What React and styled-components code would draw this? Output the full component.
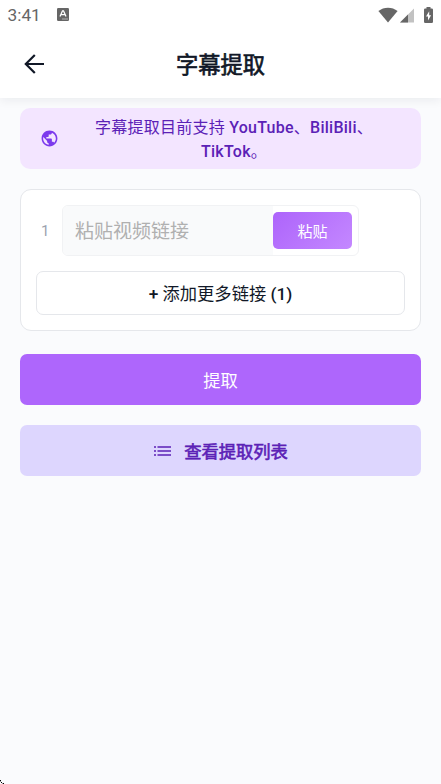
import React from "react";
import styled, { createGlobalStyle } from "styled-components";

const GlobalStyle = createGlobalStyle`
  * {
    box-sizing: border-box;
  }
  body {
    margin: 0;
    background: #fafbfd;
    font-family: Roboto, "Noto Sans CJK SC", sans-serif;
  }
  button, input {
    font-family: inherit;
  }
`;

const Screen = styled.div`
  position: relative;
  height: 784px;
  overflow: hidden;
  background: #fafbfd;
`;

const Top = styled.div`
  height: 98px;
  background: #fff;
  box-shadow: 0 2px 10px rgba(17, 24, 39, 0.07);
`;

const StatusBar = styled.div`
  height: 30px;
  padding: 0 8px 1px 7px;
  display: flex;
  align-items: center;
  color: #666;
`;

const Clock = styled.span`
  font-size: 17.3px;
  line-height: 29px;
  width: 50px;
  padding: 1px 0 0 0.5px;
`;

const StatusIcons = styled.div`
  margin-left: auto;
  display: flex;
`;

const Header = styled.header`
  height: 68px;
  padding: 0 22px;
  display: grid;
  grid-template-columns: 24px 1fr 24px;
  align-items: center;
`;

const IconButton = styled.button`
  display: flex;
  padding: 0;
  border: 0;
  background: none;
  color: #111827;
`;

// regular glyphs with a thin outline, lighter than the real bold cut
const Title = styled.h1`
  margin: 0;
  padding-top: 2px;
  text-align: center;
  font-size: 22.3px;
  line-height: 32px;
  font-weight: 400;
  -webkit-text-stroke: 0.65px currentColor;
  color: #111827;
`;

const Latin = styled.span`
  font-weight: 500;
`;

const Content = styled.main`
  padding: 10px 20px;
`;

const Notice = styled.div`
  height: 61px;
  padding: 0 20px 0 19.5px;
  display: flex;
  align-items: center;
  border-radius: 10px;
  background: #f3e5ff;
  color: #7c3aed;
`;

const NoticeText = styled.p`
  flex: 1;
  margin: 0 0 0 10.5px;
  padding: 2px 2px 0 0;
  text-align: center;
  font-size: 16px;
  line-height: 23.5px;
  letter-spacing: 0.25px;
  color: #5b21b6;
`;

const Card = styled.section`
  height: 142px;
  margin-top: 20px;
  padding: 15px;
  border: 1px solid #e5e7eb;
  border-radius: 11px;
  background: #fff;
`;

const LinkRow = styled.div`
  display: flex;
  align-items: center;
  height: 51px;
`;

const Index = styled.span`
  width: 26px;
  padding-left: 5px;
  font-size: 15px;
  color: #9ca3af;
`;

const Field = styled.div`
  display: flex;
  align-items: center;
  width: 297px;
  height: 51px;
  padding-right: 6px;
  border: 1px solid #f1f2f4;
  border-radius: 6px;
  overflow: hidden;
`;

const LinkInput = styled.input`
  flex: 1;
  min-width: 0;
  height: 49px;
  padding: 2px 12px 0;
  border: 0;
  background: #f9fafb;
  font-size: 19px;
  &::placeholder {
    color: #b0b0b0;
    opacity: 1;
  }
`;

const PasteButton = styled.button`
  width: 79px;
  height: 37px;
  padding: 0 0 1px;
  border: 0;
  border-radius: 5px;
  background: linear-gradient(135deg, #ad64fb, #c488ff);
  color: #fff;
  font-size: 15px;
`;

const AddButton = styled.button`
  display: block;
  width: 369px;
  height: 44px;
  margin-top: 15px;
  padding: 0 0 2px;
  border: 1px solid #e5e7eb;
  border-radius: 7px;
  background: #fff;
  color: #111827;
  font-size: 17.3px;
`;

const ActionButton = styled.button`
  display: flex;
  align-items: center;
  justify-content: center;
  gap: 12px;
  width: 100%;
  height: 51px;
  margin-top: ${props => props.$gap}px;
  padding: 0;
  border: 0;
  border-radius: 7px;
  background: ${props => (props.$primary ? "#ae66fc" : "#ddd6fe")};
  color: ${props => (props.$primary ? "#fff" : "#5b21b6")};
  font-size: 17.3px;
  -webkit-text-stroke: ${props => (props.$primary ? "0" : "0.6px")};
`;

const ScreenCorner = styled.svg`
  position: absolute;
  left: 0;
  bottom: 0;
`;

const KeyboardIcon = () => (
  <svg width="12" height="13" viewBox="0 0 12 13">
    <rect width="12" height="13" rx="1.2" fill="#666" />
    <path d="M3 8.4 5.5 2.8h1L9 8.4M4 6.7h4" fill="none" stroke="#fff" strokeWidth="1.3" />
    <path d="M5.5 11h1M7.5 11h1M9.5 11h1" stroke="#fff" strokeWidth="1" />
  </svg>
);

const WifiIcon = () => (
  <svg width="20" height="16" viewBox="0 0 20 16">
    <path d="M0.4 4.1C5.8-.4 14.2-.4 19.6 4.1L10 15.5z" fill="#666" />
  </svg>
);

const SignalIcon = () => (
  <svg width="14" height="16" viewBox="0 0 14 16">
    <path d="M0 15.5 14 1.5v14z" fill="#c2c2c2" />
    <path d="M0 15.5 8 7.5v8z" fill="#666" />
  </svg>
);

const BatteryIcon = () => (
  <svg width="9" height="16" viewBox="0 0 9 16">
    <path d="M2.5 0h4v1.6h1.3Q9 1.6 9 2.8v12Q9 16 7.8 16H1.2Q0 16 0 14.8v-12Q0 1.6 1.2 1.6h1.3z" fill="#666" />
    <path d="M5.2 4.2 2 9.5h2v4L7.1 8.2H5.2z" fill="#fff" />
  </svg>
);

const BackIcon = () => (
  <svg width="24" height="24" viewBox="0 0 24 24" fill="none" stroke="currentColor" strokeWidth="2.2">
    <path d="M22 12H4M12.8 3 3.8 12l9 9" />
  </svg>
);

const GlobeIcon = () => (
  <svg width="19" height="19" viewBox="0 0 24 24" fill="currentColor">
    <path d="M12 2C6.48 2 2 6.48 2 12s4.48 10 10 10 10-4.48 10-10S17.52 2 12 2zm-1 17.93c-3.95-.49-7-3.85-7-7.93 0-.62.08-1.21.21-1.79L9 15v1c0 1.1.9 2 2 2v1.93zm6.9-2.54c-.26-.81-1-1.39-1.9-1.39h-1v-3c0-.55-.45-1-1-1H8v-2h2c.55 0 1-.45 1-1V7h2c1.1 0 2-.9 2-2v-.41c2.93 1.19 5 4.06 5 7.41 0 2.08-.8 3.97-2.1 5.39z" />
  </svg>
);

const ListIcon = () => (
  <svg width="19" height="12" viewBox="0 0 19 12" stroke="currentColor" strokeWidth="1.6">
    <path d="M1 2h2M1 6h2M1 10h2M4.5 2H18M4.5 6H18M4.5 10H18" />
  </svg>
);

const App = () => {
  return (
    <Screen>
      <GlobalStyle />
      <Top>
        <StatusBar>
          <Clock>3:41</Clock>
          <KeyboardIcon />
          <StatusIcons>
            <WifiIcon />
            <span style={{ width: 2 }} />
            <SignalIcon />
            <span style={{ width: 10 }} />
            <BatteryIcon />
          </StatusIcons>
        </StatusBar>
        <Header>
          <IconButton aria-label="返回">
            <BackIcon />
          </IconButton>
          <Title>字幕提取</Title>
        </Header>
      </Top>
      <Content>
        <Notice>
          <GlobeIcon />
          <NoticeText>
            字幕提取目前支持 <Latin>YouTube</Latin>、<Latin>BiliBili</Latin>、<Latin>TikTok</Latin>。
          </NoticeText>
        </Notice>
        <Card>
          <LinkRow>
            <Index>1</Index>
            <Field>
              <LinkInput placeholder="粘贴视频链接" />
              <PasteButton>粘贴</PasteButton>
            </Field>
          </LinkRow>
          <AddButton>
            <Latin>+</Latin> 添加更多链接 <Latin>(1)</Latin>
          </AddButton>
        </Card>
        <ActionButton $primary $gap={23}>
          提取
        </ActionButton>
        <ActionButton $gap={20}>
          <ListIcon />
          查看提取列表
        </ActionButton>
      </Content>
      <ScreenCorner width="4" height="4" viewBox="0 0 4 4">
        <path d="M0 0h1v1H0zM1 2h1v1H1zM3 3h1v1H3z" fill="#000" />
        <path d="M0 1h1v1H0zM2 3h1v1H2z" fill="#999" />
      </ScreenCorner>
    </Screen>
  );
};

export default App;
